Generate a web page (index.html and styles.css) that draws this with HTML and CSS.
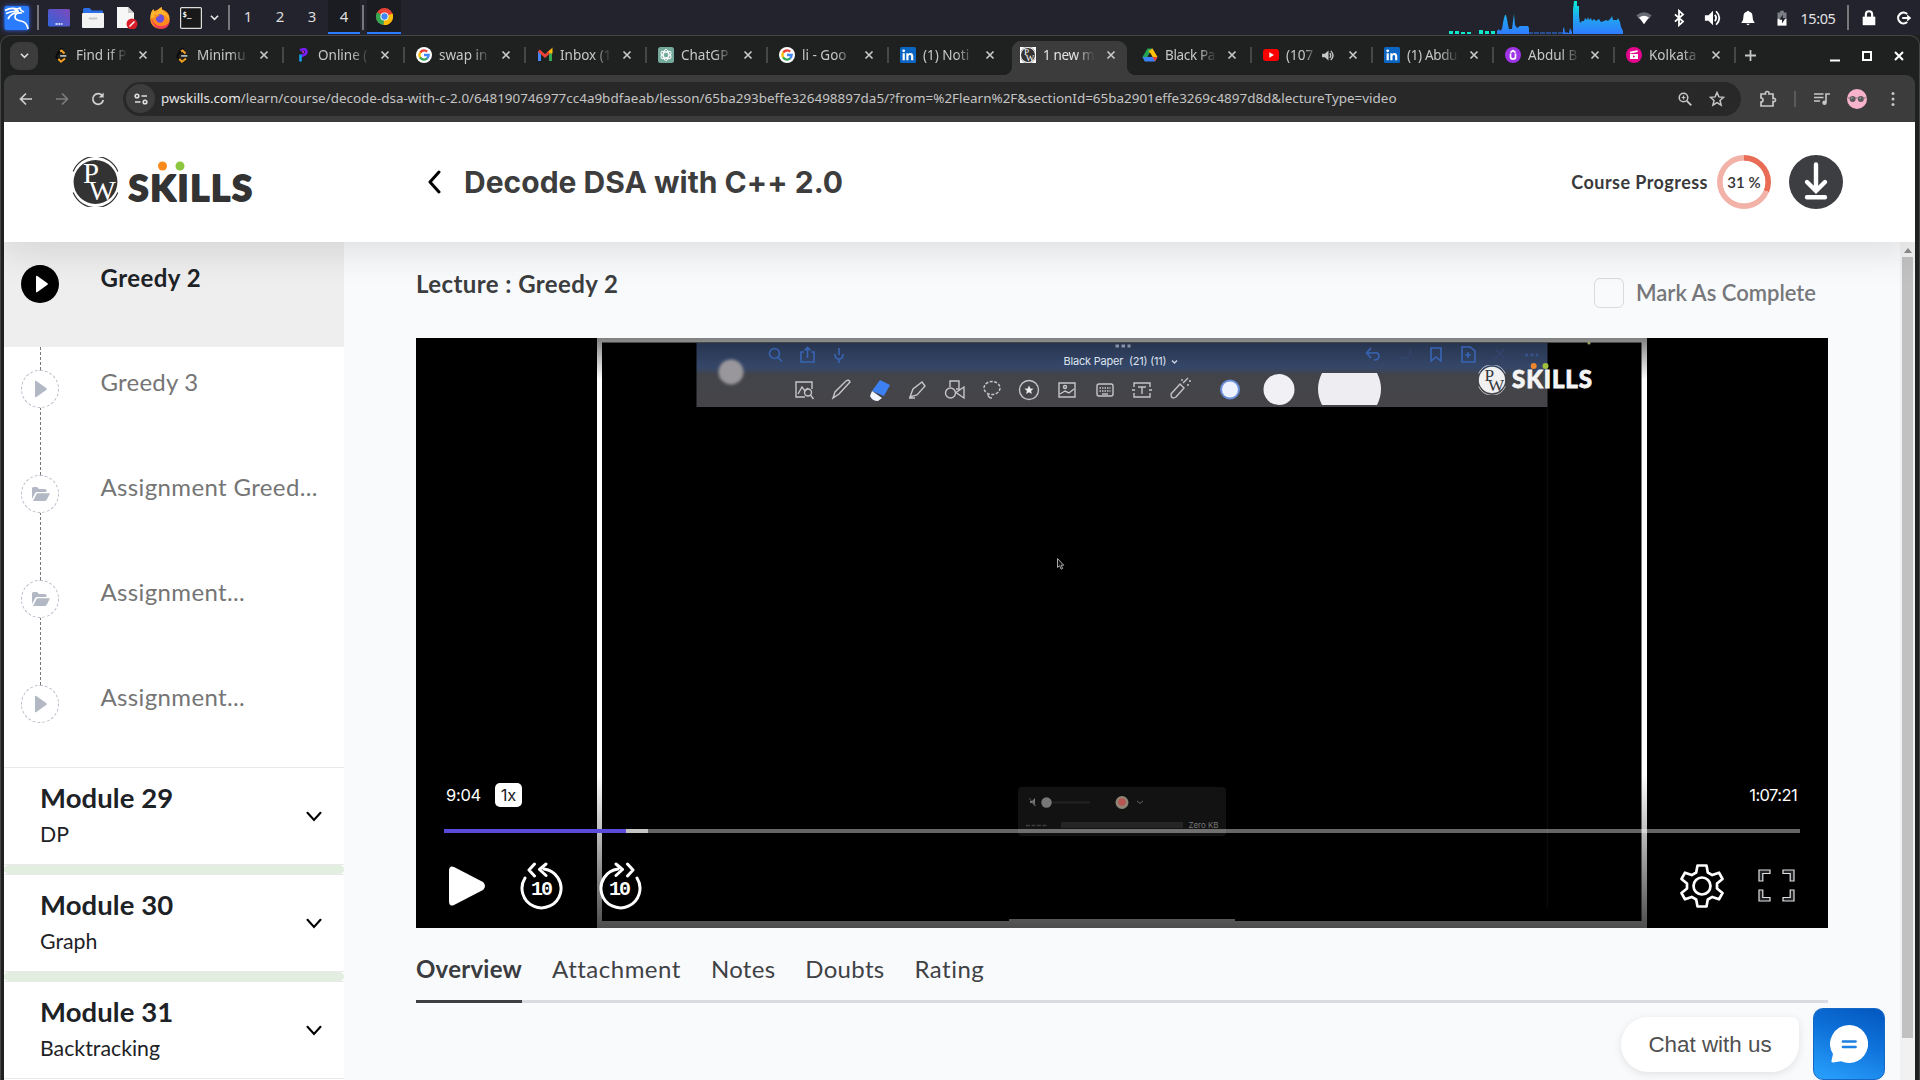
FILE: index.html
```html
<!DOCTYPE html>
<html lang="en">
<head>
<meta charset="utf-8">
<title>Decode DSA with C++ 2.0</title>
<link rel="stylesheet" href="styles.css">
</head>
<body>
<svg class="defs" aria-hidden="true">
  <symbol id="i-x" viewBox="0 0 10 10"><path d="M1.5 1.5l7 7M8.5 1.5l-7 7" fill="none" stroke="currentColor" stroke-width="1.7"/></symbol>
  <symbol id="i-leet" viewBox="0 0 16 18"><path d="M9.500 1L4.500 6.500" fill="none" stroke="#0b0b0b" stroke-width="2.200"/><path d="M6.500 5.500L3.200 9q-1.200 1.500 0 3l1.300 1.500" fill="none" stroke="#0b0b0b" stroke-width="2.200"/><path d="M7 5L8.500 4l3.500 3.300M5 13.500l3 3 4.500-3.500" fill="none" stroke="#f6a11f" stroke-width="2.200"/><path d="M7 10h7" stroke="#b5b5b5" stroke-width="2"/></symbol>
  <symbol id="i-google" viewBox="0 0 16 16"><circle cx="8" cy="8" r="8" fill="#fff"/><g fill="none" stroke-width="2.3"><path d="M4.2 5.6A4.6 4.6 0 0 1 11.2 4.7" stroke="#ea4335"/><path d="M4.2 5.5a4.8 4.8 0 0 0 0 5" stroke="#fbbc05"/><path d="M4.1 10.4a4.6 4.6 0 0 0 7 1" stroke="#34a853"/><path d="M8 8h4.7a4.8 4.8 0 0 1-1.7 3.5" stroke="#4285f4"/></g></symbol>
  <symbol id="i-in" viewBox="0 0 16 16"><rect width="16" height="16" rx="1.5" fill="#0a66c2"/><path d="M2.6 6.2h2.2v7H2.6zM6.3 6.2h2v1c1-1.700 5-1.700 5 2v4h-2.200V9.500c0-2-2.600-2-2.600 0v3.700H6.300z" fill="#fff"/><circle cx="3.7" cy="3.8" r="1.4" fill="#fff"/></symbol>
  <symbol id="i-pw" viewBox="0 0 48 52">
    <circle cx="24" cy="26" r="22.8" fill="currentColor"/>
    <path d="M.8 15A25 25 0 0 1 47.200 15M.8 37A25 25 0 0 0 47.200 37" fill="none" stroke="currentColor" stroke-width="1.200"/>
    <text class="pw-letter" x="11" y="27.500" font-size="30">P</text>
    <text class="pw-letter" x="17" y="45" font-size="28" textLength="28" lengthAdjust="spacingAndGlyphs">W</text>
  </symbol>
  <symbol id="i-play" viewBox="0 0 12 18"><path d="M1 .8L11.500 8.200q.6.800 0 1.600L1 17.200q-1 .3-1-.8V1.600q0-1.100 1-.8z" fill="currentColor"/></symbol>
  <symbol id="i-folder" viewBox="0 0 18 14"><path d="M0 12V1.500Q0 0 1.500 0h3.500l2 2h6q1.500 0 1.500 1.500V5H5Q3.800 5 3.300 6z" fill="currentColor"/><path d="M1 14l3-6q.6-1.700 2-1.700h12l-3 6Q14.500 14 13 14z" fill="currentColor"/></symbol>
  <symbol id="i-down" viewBox="0 0 16 11"><path d="M1.500 1.800L8 9l6.500-7.200" fill="none" stroke="#000" stroke-width="2.100" stroke-linecap="round"/></symbol>
</svg>

<div class="taskbar">
  <svg class="kali" viewBox="0 0 32 34"><rect x="4.500" y="5" width="24.500" height="24" rx="2" fill="#2b7bff"/><path d="M5 9.500Q11 6 17 8l3-1 1 2.500 3 1.500M6 12.500q7-3 13-2M8 18q4-8 14-6-7-1-7 4 0 3 6 4 6 1 7 8M14 8l4 2" fill="none" stroke="#fff" stroke-width="1.700"/></svg>
  <i class="vbar"></i>
  <svg class="app first" viewBox="0 0 22 18"><defs><linearGradient id="dg" x1="0" y1="1" x2="1" y2="0"><stop stop-color="#3264dd"/><stop offset="1" stop-color="#7d49b8"/></linearGradient></defs><rect width="22" height="17.500" rx="1.500" fill="url(#dg)"/><path d="M7.500 15h7" stroke="#fff" stroke-width="1.500" stroke-dasharray="2 .8"/></svg>
  <svg class="app" viewBox="0 0 22 20"><path d="M1 1.500Q1 0 2.500 0h5L10 2.500h10q1 0 1 1V8H1z" fill="#2d6fe8"/><rect y="5" width="22" height="15" rx="1" fill="#f3f3f3"/><rect x="6.500" y="9.500" width="9" height="2" rx="1" fill="#c9c9c9"/></svg>
  <svg class="app doc" viewBox="0 0 22 22"><path d="M1 0h11l6 6v15H1z" fill="#f7f7f7"/><path d="M12 0l6 6h-6z" fill="#ccc"/><circle cx="16" cy="17" r="5.500" fill="#d91e2a"/><path d="M13.500 19.500l5-5" stroke="#fff" stroke-width="1.400"/></svg>
  <svg class="app fox" viewBox="0 0 22 22"><circle cx="11" cy="12" r="9.800" fill="#ff8a1e"/><path d="M1.500 12Q1 5 4.500 2q.5 3 3 3.500Q9 1 13 0q-.5 3 2 4.500 6 3.500 5 10Q18 6 10 8z" fill="#ffb52e"/><path d="M2 10q2 12 10 12 8 0 9-9-2 6-9 6T2 10z" fill="#f03e55"/><circle cx="11" cy="11.500" r="4.200" fill="#6a50dd"/><path d="M5 8q4-1 6 1-4 0-4 3z" fill="#ff8a1e"/></svg>
  <svg class="app" viewBox="0 0 22 22"><rect x=".6" y=".6" width="20.800" height="20.800" rx="1" fill="#191919" stroke="#ddd" stroke-width="1.200"/><text x="2.500" y="9.500" font-size="7.500" font-family="DejaVu Sans Mono, monospace" font-weight="700" fill="#fff">$_</text></svg>
  <svg class="caret" viewBox="0 0 10 8"><path d="M1 1.500l4 4 4-4" fill="none" stroke="#e6e6e6" stroke-width="1.800"/></svg>
  <i class="vbar"></i>
  <div class="spaces"><span>1</span><span>2</span><span>3</span><span class="on">4</span></div>
  <i class="vbar"></i>
  <div class="task"><svg viewBox="0 0 20 20" width="17" height="17"><circle cx="10" cy="10" r="10" fill="#ea4335"/><path d="M10 10L1.300 5A10 10 0 0 0 9 20z" fill="#34a853"/><path d="M10 10l9.500-3.500A10 10 0 0 1 9 20z" fill="#fbbc05"/><circle cx="10" cy="10" r="4.800" fill="#fff"/><circle cx="10" cy="10" r="3.700" fill="#4285f4"/></svg></div>
  <svg class="meter" viewBox="1449 0 177 34" width="177" height="34"><defs><linearGradient id="mg" x1="0" y1="0" x2="0" y2="34" gradientUnits="userSpaceOnUse"><stop stop-color="#08f5d4"/><stop offset=".5" stop-color="#20a8f0"/><stop offset="1" stop-color="#2f7bff"/></linearGradient></defs><path d="M1449 31h4v3h-4zM1455 31h4v3h-4zM1461 32h4v2h-4zM1467 32h4v2h-4zM1479 30h4v4h-4zM1485 31h4v3h-4zM1491 31h4v3h-4z" fill="#0fe6cc"/><path d="M1497 34v-3l2-2 1 2 2-2 1-6 1-5 1-3h1l1 4 1 6 1 4h3l1-8 1-7 1 11 2 3 3-2h8l1 2v6zM1563 34v-5l1-2 1 6h4l1-5 2 4v2z" fill="url(#mg)"/><path d="M1573 34V10l1-9h3v5h2v10l1 7 2-2h2l1-3 2 2 1-3 1 3 2-2 1 3 2-2 2 2 3-2 2 3 3-1 2-1 2 1 3-3 1-2 1 4h4l1-2 2 4 1 5 2 4v3l2 1v2z" fill="url(#mg)"/><path d="M1528 33h40" stroke="#2f7bff" stroke-dasharray="5 1"/></svg>
  <div class="tray">
    <svg viewBox="0 0 20 20"><path d="M1.500 7Q10 0 18.500 7l-3 4h-11z" fill="#666a73"/><path d="M4.500 9.500q5.500-4 11 0L10 17z" fill="#fff"/></svg>
    <svg viewBox="0 0 20 20"><path d="M5.500 6l9 8-4.500 4V2l4.500 4-9 8" fill="none" stroke="#fff" stroke-width="2"/></svg>
    <svg viewBox="0 0 20 20"><path d="M1 7h4l5-5v16l-5-5H1z" fill="#fff"/><path d="M12 6.500q3 3.500 0 7M13.500 2.500q7 7.500 0 15" fill="none" stroke="#fff" stroke-width="2"/></svg>
    <svg viewBox="0 0 20 20"><path d="M2.500 15.500Q5 13 5 8q0-4 3.500-5 1.500-2 3 0Q15 4 15 8q0 5 2.500 7.500zM8 16.500h4q-2 3-4 0z" fill="#fff"/></svg>
    <svg class="bat" viewBox="0 0 20 20"><path d="M5 4h3V2h4v2h3v7H5z" fill="#7d7f86"/><path d="M5 11h10v7.500H5z" fill="#fff"/><path d="M11 6l-4 6h3v4l4-6h-3z" fill="#23232b"/></svg>
    <span class="clock">15:05</span>
    <i class="vbar"></i>
    <svg viewBox="0 0 20 20"><path d="M3 8.500h14V18H3z" fill="#fff"/><path d="M6.500 9V6q0-3.500 3.500-3.500T13.500 6v3" fill="none" stroke="#fff" stroke-width="2.400"/></svg>
    <svg viewBox="0 0 20 20"><path d="M13.500 5.500a6 6 0 1 0 0 9" fill="none" stroke="#fff" stroke-width="2.400"/><path d="M8 10h7" stroke="#fff" stroke-width="2.200"/><path d="M13.500 6l4.500 4-4.500 4z" fill="#fff"/></svg>
  </div>
</div>

<div class="window">
  <div class="tabstrip">
    <div class="tabmenu"><svg viewBox="0 0 10 8" width="9" height="8"><path d="M1 1.500l4 4 4-4" fill="none" stroke="#ddd" stroke-width="1.800"/></svg></div>
    <div class="tab"><svg class="fav"><use href="#i-leet"/></svg><span class="lbl">Find if P</span><svg class="x"><use href="#i-x"/></svg></div>
    <div class="tab"><svg class="fav"><use href="#i-leet"/></svg><span class="lbl">Minimu</span><svg class="x"><use href="#i-x"/></svg></div>
    <div class="tab"><svg class="fav" viewBox="0 0 16 16"><path d="M5 3.200q6-2.500 6.500 1.300 0 3-5 4.500" fill="none" stroke="#7a1cff" stroke-width="2.600"/><path d="M5.500 7.500v7" stroke="#12a4f5" stroke-width="2.500"/><path d="M7.500 6q1.500-1 0-2" fill="none" stroke="#e42be0" stroke-width="1.500"/></svg><span class="lbl">Online (</span><svg class="x"><use href="#i-x"/></svg></div>
    <div class="tab"><svg class="fav"><use href="#i-google"/></svg><span class="lbl">swap in</span><svg class="x"><use href="#i-x"/></svg></div>
    <div class="tab"><svg class="fav" viewBox="0 0 16 16"><path d="M2.500 14V4" stroke="#4285f4" stroke-width="3"/><path d="M13.500 14V4" stroke="#34a853" stroke-width="3"/><path d="M1.800 3.500L8 9l6.200-5.500" fill="none" stroke="#ea4335" stroke-width="3"/><path d="M12 5.500L14.500 3v3.500" stroke="#fbbc05" fill="none" stroke-width="2"/></svg><span class="lbl">Inbox (1</span><svg class="x"><use href="#i-x"/></svg></div>
    <div class="tab"><svg class="fav" viewBox="0 0 16 16"><rect width="16" height="16" rx="2.500" fill="#74aa9c"/><g fill="none" stroke="#fff"><ellipse cx="8" cy="8" rx="2.700" ry="5.500"/><ellipse cx="8" cy="8" rx="2.700" ry="5.500" transform="rotate(60 8 8)"/><ellipse cx="8" cy="8" rx="2.700" ry="5.500" transform="rotate(120 8 8)"/></g></svg><span class="lbl">ChatGP</span><svg class="x"><use href="#i-x"/></svg></div>
    <div class="tab"><svg class="fav"><use href="#i-google"/></svg><span class="lbl">li - Goo</span><svg class="x"><use href="#i-x"/></svg></div>
    <div class="tab last"><svg class="fav"><use href="#i-in"/></svg><span class="lbl">(1) Noti</span><svg class="x"><use href="#i-x"/></svg></div>
    <div class="tab active"><svg class="fav favpw"><use href="#i-pw"/></svg><span class="lbl tight">1 new m</span><svg class="x"><use href="#i-x"/></svg></div>
    <div class="tab"><svg class="fav" viewBox="0 0 16 16"><path d="M5.500 1.500h5L5.500 10 3 14.500.500 10z" fill="#23a455"/><path d="M10.500 1.500l5 8.500h-5L6.500 4z" fill="#ffc107"/><path d="M.500 10h15L13 14.500H3z" fill="#3b82f6"/><path d="M15.500 10L13 14.500 10.500 10z" fill="#ea4335"/><path d="M8 5.500l2.500 4.500h-5z" fill="#1f2120"/></svg><span class="lbl tight">Black Pa</span><svg class="x"><use href="#i-x"/></svg></div>
    <div class="tab"><svg class="fav" viewBox="0 0 16 16"><rect y="2" width="16" height="12" rx="3" fill="#f00"/><path d="M6.300 5.300v5.400L11 8z" fill="#fff"/></svg><span class="lbl short">(107</span><svg class="snd" viewBox="0 0 14 12"><path d="M0 4h3l4-3.500v11L3 8H0z" fill="#c7c7c7"/><path d="M8.500 3.500q2 2.500 0 5M9.500 1q5 5 0 10" fill="none" stroke="#c7c7c7" stroke-width="1.400"/></svg><svg class="x"><use href="#i-x"/></svg></div>
    <div class="tab"><svg class="fav"><use href="#i-in"/></svg><span class="lbl tight">(1) Abdu</span><svg class="x"><use href="#i-x"/></svg></div>
    <div class="tab"><svg class="fav" viewBox="0 0 16 16"><circle cx="8" cy="8" r="8" fill="#a032e8"/><path d="M5.500 6.500v3.500q0 2 2.500 2t2.500-2V6.500M5.500 5.500L8 3.500l2.500 2" fill="none" stroke="#fff" stroke-width="1.700"/></svg><span class="lbl">Abdul B</span><svg class="x"><use href="#i-x"/></svg></div>
    <div class="tab"><svg class="fav" viewBox="0 0 16 16"><circle cx="8" cy="8" r="8" fill="#e6068d"/><path d="M4 7h8v5H4zM3.800 4.800l7.600-1.500.4 1.600-7.600 1.500z" fill="#fff"/><path d="M7 8.200v2.600L9.300 9.500z" fill="#e6068d"/></svg><span class="lbl">Kolkata</span><svg class="x"><use href="#i-x"/></svg></div>
    <svg class="plus" viewBox="0 0 10 10"><path d="M5 0v10M0 5h10" stroke="#c7c7c7" stroke-width="1.600"/></svg>
    <div class="winctl">
      <svg viewBox="0 0 10 12"><path d="M0 10.500h10" stroke="#fff" stroke-width="2"/></svg>
      <svg viewBox="0 0 10 12"><rect x="1" y="2" width="8" height="8" fill="none" stroke="#fff" stroke-width="2"/></svg>
      <svg viewBox="0 0 10 12"><path d="M1 2l8 8M9 2l-8 8" stroke="#fff" stroke-width="2"/></svg>
    </div>
  </div>

  <div class="toolbar">
    <svg class="nav" viewBox="0 0 14 14"><path d="M13 7H2M7 1.500L1.500 7 7 12.500" fill="none" stroke="#d0d0d0" stroke-width="1.700"/></svg>
    <svg class="nav" viewBox="0 0 14 14"><path d="M1 7h11M7 1.500L12.500 7 7 12.500" fill="none" stroke="#7c7c7c" stroke-width="1.700"/></svg>
    <svg class="nav" viewBox="0 0 14 14"><path d="M11.500 4A5.300 5.300 0 1 0 12.300 8" fill="none" stroke="#d0d0d0" stroke-width="1.700"/><path d="M12.700.500v5h-5z" fill="#d0d0d0"/></svg>
    <div class="omni">
      <div class="site"><svg viewBox="0 0 14 12" width="14" height="12"><g fill="none" stroke="#e0e0e0" stroke-width="1.600"><circle cx="3" cy="3" r="1.800"/><path d="M7.500 3H13M1 9h5.500"/><circle cx="11" cy="9" r="1.800"/></g></svg></div>
      <span class="url"><b>pwskills.com</b>/learn/course/decode-dsa-with-c-2.0/648190746977cc4a9bdfaeab/lesson/65ba293beffe326498897da5/?from=%2Flearn%2F&amp;sectionId=65ba2901effe3269c4897d8d&amp;lectureType=video</span>
      <svg class="zoomi" viewBox="0 0 14 14"><circle cx="5.500" cy="5.500" r="4.300" fill="none" stroke="#c7c7c7" stroke-width="1.500"/><path d="M8.800 8.800l4.500 4.500" stroke="#c7c7c7" stroke-width="1.900"/><path d="M5.500 3.600v3.800M3.600 5.500h3.800" stroke="#c7c7c7" stroke-width="1.200"/></svg>
      <svg class="star" viewBox="0 0 16 16"><path d="M8 1.500l1.900 4.400 4.700.400-3.600 3.100 1.100 4.700L8 11.600l-4.100 2.500L5 9.400 1.400 6.300l4.700-.400z" fill="none" stroke="#c7c7c7" stroke-width="1.500"/></svg>
    </div>
    <svg class="ext" viewBox="0 0 18 18"><path d="M2 4h4.500q-.500-2.500 1.700-2.500T10 4h4v4.500q2.500-.500 2.500 1.500T14 11.500V16H2v-4q2 0 2-2T2 8z" fill="none" stroke="#c7c7c7" stroke-width="1.700"/></svg>
    <i class="tsep"></i>
    <svg class="media" viewBox="0 0 16 14"><path d="M0 2h9.500M0 5.500h9.500M0 9h6M12 10.500V2h4" fill="none" stroke="#c7c7c7" stroke-width="1.600"/><circle cx="10.500" cy="10.700" r="2.200" fill="#c7c7c7"/></svg>
    <svg class="ava" viewBox="0 0 20 20"><circle cx="10" cy="10" r="10" fill="#f7b3cc"/><circle cx="5.600" cy="10" r="3" fill="#5a5a5a"/><circle cx="13.800" cy="10" r="3" fill="#5a5a5a"/><path d="M4 9.500l1.500-1M12.500 9.500l1.500-1" stroke="#fff"/><path d="M1 9h18" stroke="#666" stroke-width=".8"/></svg>
    <svg class="dots" viewBox="0 0 4 16"><circle cx="2" cy="2.500" r="1.500" fill="#c7c7c7"/><circle cx="2" cy="8" r="1.500" fill="#c7c7c7"/><circle cx="2" cy="13.500" r="1.500" fill="#c7c7c7"/></svg>
  </div>

  <div class="page">
    <header class="head">
      <svg class="logo" viewBox="0 0 184 54" width="184" height="54">
        <use href="#i-pw" x="0" y="1" width="47" height="50"/>
        <text class="brand" x="56.500" y="44.500" font-size="36.500" textLength="123.500">SKILLS</text>
        <circle cx="90.500" cy="10" r="4.500" fill="#f98a1b"/><circle cx="108" cy="10" r="4.500" fill="#8cc63f"/>
      </svg>
      <svg class="back" viewBox="0 0 14 24" width="14" height="24"><path d="M12 2L3 12l9 10" fill="none" stroke="#000" stroke-width="3" stroke-linecap="round" stroke-linejoin="round"/></svg>
      <h1 class="title">Decode DSA with C++ 2.0</h1>
      <span class="cp">Course Progress</span>
      <div class="ring"><span>31 %</span></div>
      <svg class="dl" viewBox="0 0 54 54" width="54" height="54"><circle cx="27" cy="27" r="27" fill="#3d3e42"/><path d="M27 9.500V32M18 27l9 9 9-9M18 42.300h18" fill="none" stroke="#fff" stroke-width="4.400" stroke-linecap="round"/></svg>
    </header>

    <div class="main">
      <aside class="side">
        <div class="lesson cur"><div class="rail"><div class="dot"><svg width="12" height="18"><use href="#i-play"/></svg></div></div><span>Greedy 2</span></div>
        <div class="lesson"><div class="rail"><div class="dot"><svg width="12" height="18"><use href="#i-play"/></svg></div></div><span>Greedy 3</span></div>
        <div class="lesson wide"><div class="rail"><div class="dot"><svg width="18" height="14"><use href="#i-folder"/></svg></div></div><span>Assignment Greed...</span></div>
        <div class="lesson wide"><div class="rail"><div class="dot"><svg width="18" height="14"><use href="#i-folder"/></svg></div></div><span>Assignment...</span></div>
        <div class="lesson wide end"><div class="rail"><div class="dot"><svg width="12" height="18"><use href="#i-play"/></svg></div></div><span>Assignment...</span></div>
        <div class="module"><div><h2>Module 29</h2><p>DP</p></div><svg width="16" height="11"><use href="#i-down"/></svg></div>
        <div class="strip"></div>
        <div class="module"><div><h2>Module 30</h2><p>Graph</p></div><svg width="16" height="11"><use href="#i-down"/></svg></div>
        <div class="strip"></div>
        <div class="module"><div><h2>Module 31</h2><p>Backtracking</p></div><svg width="16" height="11"><use href="#i-down"/></svg></div>
      </aside>

      <section class="content">
        <div class="lechead">
          <h2>Lecture : Greedy 2</h2>
          <label class="mark"><i></i><span>Mark As Complete</span></label>
        </div>
        <div class="video">
          <svg class="frame" viewBox="416 338 1412 590" width="1412" height="590">
            <defs>
              <linearGradient id="tb" x1="0" y1="0" x2="0" y2="1"><stop stop-color="#27354f"/><stop offset=".38" stop-color="#354769"/><stop offset=".5" stop-color="#434449"/><stop offset="1" stop-color="#454549"/></linearGradient>
              <linearGradient id="sh" x1="0" y1="0" x2="0" y2="1"><stop stop-opacity=".5"/><stop offset=".07" stop-opacity="0"/><stop offset=".74" stop-opacity="0"/><stop offset="1" stop-opacity=".7"/></linearGradient>
              <filter id="soft"><feGaussianBlur stdDeviation="1.500"/></filter>
              <filter id="slight"><feGaussianBlur stdDeviation=".5"/></filter>
            </defs>
            <path d="M597 338h1050v590H597z" fill="#fff"/>
            <path d="M602 342.500h1039.500V921H602z" fill="#000"/>
            <path d="M1009 919h226v3h-226z" fill="#fff"/>
            <path d="M597 338h1050v590H597z" fill="url(#sh)"/>
            <path d="M1547.500 407v500" stroke="#0b0b0d" stroke-width="1.500"/>
            <path d="M696.500 343h851v64h-851z" fill="url(#tb)"/>
            <circle cx="731" cy="372" r="12.500" fill="#99979b" filter="url(#soft)"/>
            <g fill="none" stroke="#3764b4" stroke-width="1.600" filter="url(#slight)">
              <circle cx="774.500" cy="353.500" r="5"/><path d="M778 357.500l4 4M804 352h-3v10h13v-10h-3M807.500 358v-10M804.500 350.500l3-3 3 3M839 348v7M835 354q0 5 4 5t4-5M839 359v4"/>
              <path d="M1374 360q5 0 5-4t-5-3h-6M1371 348l-4.500 5 4.500 5M1431 348h10v13l-5-4-5 4zM1462 347h8l5 4v11h-13zM1468 352v6M1465 355h6"/>
              <path d="M1410 350q2 5-3 8h-8M1496 350l9 9M1504 349l-10 11" stroke="#33436d"/>
              <path d="M1525 355h13" stroke-dasharray="3 2.500" stroke-width="2.500" stroke="#36538c"/>
            </g>
            <path d="M1115.500 346h15" stroke="#8791a5" stroke-width="3" stroke-dasharray="3.500 2.500"/>
            <text x="1063.500" y="365" font-size="11" textLength="103" xml:space="preserve" fill="#dde3ef" font-family="Inter, sans-serif">Black Paper  (21) (11)</text>
            <path d="M1172 360.500l2.500 2.500 2.500-2.500" fill="none" stroke="#cdd5e4" stroke-width="1.400"/>
            <g fill="none" stroke="#c5c4c7" stroke-width="1.400">
              <path d="M812 389v-7h-16v15h9M798 394l4-7 3 4 3-3"/><circle cx="808" cy="392.500" r="3.500"/><path d="M810.500 395l3 4"/>
              <path d="M833 398l2-6 11-11q3-2 4 1l-11 12zM910 397l3-8 9-7 3 4-8 9zM909 398h6"/>
              <circle cx="950.500" cy="393" r="5"/><path d="M950 387v-6h9v8h-3M964 387v11l-8-5.500z"/>
              <ellipse cx="992" cy="388" rx="8" ry="6.500" stroke-dasharray="3 1.500"/><path d="M988 394q0 4 4 4"/>
              <circle cx="1029" cy="390" r="9.500"/><path d="M1059 383h16v14h-16zM1060 394l5-3 4 2 5-4"/><circle cx="1065" cy="387" r="1.500"/>
              <rect x="1097" y="384" width="16" height="12" rx="2"/><path d="M1099.500 388h11M1099.500 391h11" stroke-dasharray="1.500 1"/><path d="M1102 394h6"/>
              <path d="M1134 387v-4h16v4M1134 393v4h16v-4M1132 390h3M1149 390h3M1138 387h8M1142 387v7"/>
              <path d="M1171 394l9-10 4 4-8 9q-5 3-5-3zM1183 383l5-5M1182 379v2M1187 385h2M1189 381h2"/>
            </g>
            <path d="M1029 385.500l1.300 2.900 3.200.300-2.400 2.100.700 3.100-2.800-1.700-2.800 1.700.7-3.100-2.400-2.100 3.200-.3z" fill="#eee"/>
            <path d="M872 391l8-11 10 5-6 11z" fill="#3d80f2"/><path d="M872 391l10 7-4 3q-6 0-8-5z" fill="#f3f6ff"/>
            <circle cx="1230" cy="389.500" r="10" fill="#6a8ed8"/><circle cx="1230" cy="389.500" r="8" fill="#eef2ff"/>
            <circle cx="1279" cy="389.500" r="15.500" fill="#f1f0f5"/>
            <path d="M1322 373h55q8 16 0 32h-55q-8-16 0-32z" fill="#eeeef2"/>
            <circle cx="1589" cy="343" r="1.600" fill="#98a068"/>
            <g class="wm"><use href="#i-pw" x="1478" y="365" width="28" height="30"/><text x="1512" y="388" font-size="24" textLength="80" class="wm-text">SKILLS</text><circle cx="1533.700" cy="366" r="3" fill="#f0862e"/><circle cx="1545.500" cy="366" r="3" fill="#a2bf3c"/></g>
            <path d="M1057.500 558.500v9l2-1.800 1.700 3.500 1.500-.8-1.600-3.200h2.600z" fill="#111" stroke="#bbb" stroke-width=".9"/>
            <rect x="1018" y="787" width="208" height="49" rx="4" fill="#121212"/>
            <path d="M1030 801h2l3-3v8l-3-3h-2z" fill="#777"/><path d="M1029 798l7 8" stroke="#555"/><path d="M1051 802.500h39" stroke="#222" stroke-width="2"/><circle cx="1046.500" cy="802.500" r="5.200" fill="#777"/>
            <circle cx="1122" cy="802.500" r="6.500" fill="#8e8577"/><circle cx="1122" cy="802" r="3.800" fill="#b95550"/><path d="M1137 801l3 2.500 3-2.500" fill="none" stroke="#666"/>
            <path d="M1026 825.500h22" stroke="#3e3e3e" stroke-width="1.500" stroke-dasharray="4 1.500"/><path d="M1061 825h122" stroke="#252525" stroke-width="6"/>
            <text x="1188.500" y="828" font-size="8" textLength="30" fill="#777" font-family="Inter, sans-serif">Zero KB</text>
          </svg>
          <div class="controls">
            <div class="times"><span>9:04</span><b>1x</b><span class="total">1:07:21</span></div>
            <div class="track"><i class="played"></i><i class="buffered"></i></div>
            <div class="buttons">
              <svg viewBox="0 0 38 42" width="38" height="42"><path d="M1 6Q1 0 6 2L35 17q4 4 0 8L6 40Q1 42 1 36z" fill="#fff"/></svg>
              <svg class="b10" viewBox="0 0 44 48" width="44" height="48"><path d="M5 16A19.500 19.500 0 1 0 24 7" fill="none" stroke="#fff" stroke-width="3" stroke-linecap="round"/><path d="M14.500 2L9 8l5.500 6M26 2l-6.500 5.500L26 13.500" fill="none" stroke="#fff" stroke-width="3" stroke-linecap="round" stroke-linejoin="round"/><text x="21" y="33" class="ten">10</text></svg>
              <svg class="f10" viewBox="0 0 44 48" width="44" height="48"><path d="M39 16A19.500 19.500 0 1 1 20 7" fill="none" stroke="#fff" stroke-width="3" stroke-linecap="round"/><path d="M29.500 2L35 8l-5.500 6M18 2l6.500 5.500L18 13.500" fill="none" stroke="#fff" stroke-width="3" stroke-linecap="round" stroke-linejoin="round"/><text x="21" y="33" class="ten">10</text></svg>
              <svg class="gear" viewBox="-22 -22 44 44" width="44" height="44"><g fill="none" stroke="#fff" stroke-width="2.700" stroke-linejoin="round"><path d="M-4.500-20.500h9l1.300 7 4.500 2.600 6.700-2.400 3.500 6.300-5.500 4.500v5l5.500 4.500-3.500 6.300-6.700-2.400-4.500 2.600-1.300 7h-9l-1.300-7-4.500-2.600-6.700 2.400-3.500-6.300 5.500-4.500v-5l-5.500-4.500 3.500-6.300 6.700 2.400 4.500-2.600z"/><circle r="8.500"/></g></svg>
              <svg class="full" viewBox="0 0 37 33" width="37" height="33"><path d="M1 12V1h11v3.500H4.800V12zM25 1h11v11h-3.800V4.500H25zM1 21v11h11v-3.500H4.800V21zM36 21v11H25v-3.500h7.200V21z" fill="#222629" stroke="#e2e2e2" stroke-width="1.200"/></svg>
            </div>
          </div>
        </div>
        <nav class="tabs"><a class="on">Overview</a><a class="att">Attachment</a><a>Notes</a><a>Doubts</a><a class="att">Rating</a></nav>
      </section>
      <div class="scroll"><i class="up"></i><i class="thumb"></i></div>
    </div>
  </div>
</div>

<div class="chat">Chat with us</div>
<div class="chatbtn"><svg viewBox="0 0 38 38" width="38" height="38"><path d="M19 0a19 19 0 1 1-8 36.200Q6 37 3 37.500q-2 0-1.500-2L3 29A19 19 0 0 1 19 0z" fill="#fff"/><path d="M13 16.500h12.500M13 22h12.500" stroke="#1b80df" stroke-width="2.700" stroke-linecap="round"/></svg></div>
</body>
</html>
```
FILE: styles.css
```css
* { box-sizing: border-box; }
body { margin: 0; width: 1920px; height: 1080px; overflow: hidden; background: #1f2120; font-family: Lato, sans-serif; display: flex; flex-direction: column; }
h1, h2, p { margin: 0; }
svg { flex: none; display: block; }
.defs { display: none; }

/* desktop panel */
.taskbar { height: 35px; flex: none; background: #23232d; display: flex; align-items: center; color: #ddd; }
.kali { width: 32px; height: 34px; filter: drop-shadow(0 0 2px #2b6bff); margin-right: 5px; }
.vbar { width: 2px; height: 25px; background: #77777c; flex: none; }
.app { width: 22px; height: 22px; margin-right: 12px; }
.first { margin-left: 9px; }
.doc { margin-right: 11px; }
.fox { margin-right: 9px; }
.caret { width: 9px; height: 8px; margin: 0 9px 0 -4px; }
.spaces { display: flex; flex: none; height: 34px; margin-left: 2px; font: 15px/32px "Noto Sans", sans-serif; align-self: flex-start; }
.spaces span { width: 32px; text-align: center; }
.spaces .on, .task { background: #1b1b22; border-bottom: 2px solid #2a7bff; }
.spaces + .vbar { margin: 0 3px 0 2px; }
.task { width: 34px; height: 34px; flex: none; align-self: flex-start; display: flex; align-items: center; justify-content: center; }
.meter { margin-left: auto; align-self: flex-start; }
.tray { display: flex; align-items: center; flex: none; width: 294px; padding-left: 9px; }
.tray svg { width: 18px; height: 18px; margin-right: 16.600px; }
.tray .bat { margin-right: 9px; }
.clock { width: 36px; flex: none; margin-right: 11px; font: 14.500px/20px "Noto Sans", sans-serif; letter-spacing: -.4px; color: #e4e4e4; }
.tray .vbar { margin-right: 11px; }

/* browser window */
.window { flex: 1; min-height: 0; border: 1px solid #454545; border-bottom: 0; border-radius: 10px 10px 0 0; padding: 0 4px 0 3px; display: flex; flex-direction: column; }
.tabstrip { height: 39px; flex: none; display: flex; align-items: center; font: 13.500px/20px "Noto Sans", sans-serif; color: #c7c7c7; }
.tabmenu { width: 28px; height: 28px; margin-left: 6px; margin-right: 3px; border-radius: 9px; background: #3c3c3c; display: flex; align-items: center; justify-content: center; }
.tab { width: 121px; height: 34px; margin-top: 5px; padding: 0 15px 6px 12px; display: flex; align-items: center; position: relative; }
.tab::after { content: ""; position: absolute; right: -1px; top: 6px; width: 2px; height: 16px; background: #474747; }
.tab.last::after, .tab.active::after { display: none; }
.fav { width: 16px; height: 16px; margin-right: 7px; }
.favpw { background: #fff; color: #222; --pw: #fff; }
.lbl { width: 54px; white-space: nowrap; mask-image: linear-gradient(90deg, #000 62%, transparent 96%); }
.tight { letter-spacing: -.350px; }
.short { width: 31px; }
.snd { width: 13px; height: 11px; margin-left: 5px; margin-right: -12px; }
.x { width: 10px; height: 10px; margin-left: auto; margin-right: -1px; color: #c7c7c7; }
.active { background: #3c3c3c; border-radius: 9px 9px 0 0; width: 115px; margin-left: 3px; margin-right: 3px; padding: 0 12px 6px 8px; color: #e3e3e3; }
.active::before { content: ""; position: absolute; left: -9px; right: -9px; bottom: 0; height: 9px; background: radial-gradient(circle at 0 0, transparent 9px, #3c3c3c 9.500px) left / 9px 9px no-repeat, radial-gradient(circle at 100% 0, transparent 9px, #3c3c3c 9.500px) right / 9px 9px no-repeat; }
.plus { width: 11px; height: 11px; margin-left: 10px; }
.winctl { display: flex; gap: 22px; margin-left: auto; margin-right: 11px; }
.winctl svg { width: 10px; height: 12px; }

.toolbar { height: 47px; flex: none; background: #3c3c3c; border-radius: 9px 9px 0 0; display: flex; align-items: center; padding-left: 15px; }
.nav { width: 14px; height: 14px; margin-right: 22px; }
.nav:nth-child(3) { margin-right: 18px; }
.omni { width: 1618px; height: 34px; border-radius: 17px; background: #282828; display: flex; align-items: center; padding: 0 16px 0 3px; }
.site { width: 29px; height: 29px; margin-right: 6px; border-radius: 50%; background: #3d3d3d; display: flex; align-items: center; justify-content: center; }
.url { font: 13.450px/20px "Noto Sans", sans-serif; color: #c4c4c4; white-space: nowrap; padding-bottom: 2px; }
.url b { font-weight: 400; color: #e6e6e6; }
.zoomi { width: 14px; height: 14px; margin-left: auto; margin-right: 17px; }
.star { width: 16px; height: 16px; }
.ext { width: 18px; height: 18px; margin-left: 18px; margin-right: 17px; }
.tsep { width: 2px; height: 16px; background: #5a5a5a; }
.media { width: 16px; height: 14px; margin-left: 18px; }
.ava { width: 20px; height: 20px; margin-left: 17px; }
.dots { width: 4px; height: 16px; margin-left: 24px; }

/* page */
.page { flex: 1; min-height: 0; background: #f9fafc; display: flex; flex-direction: column; }
.head { height: 120px; flex: none; background: #fff; display: flex; align-items: center; padding: 0 72px 0 68px; box-shadow: 0 8px 38px rgba(0, 0, 0, .12); position: relative; z-index: 2; clip-path: inset(0 0 -70px 0); }
.logo, .favpw { color: #333; }
.pw-letter { font-family: "Liberation Serif", serif; fill: var(--pw, #fff); }
.brand { font-family: Lato, sans-serif; font-weight: 900; fill: #333; stroke: #333; stroke-width: 1.800px; stroke-linejoin: round; }
.logo { margin-top: 2px; }
.back { margin-left: 171px; }
.title { margin-left: 23px; font: 700 30px/36px Inter, sans-serif; color: #3d3d3d; letter-spacing: .020px; }
.cp { margin-left: auto; margin-right: 9px; font-size: 18px; font-weight: 700; letter-spacing: .45px; color: #3a3a3c; }
.ring { width: 54px; height: 54px; border-radius: 50%; margin-right: 18px; display: flex; align-items: center; justify-content: center; background: radial-gradient(circle, #fff 21px, transparent 21.700px), conic-gradient(#e86c56 31%, #f2b2a8 0); font-size: 15px; font-weight: 600; color: #333; }

.main { flex: 1; min-height: 0; display: flex; }
.side { width: 340px; flex: none; background: #fff; overflow: hidden; }
.lesson { height: 105px; display: flex; padding-left: 17px; font-size: 24px; letter-spacing: .220px; line-height: 30px; color: #757575; }
.lesson span { margin: 20px 0 0 41.500px; }
.wide { letter-spacing: .360px; }
.rail { width: 38px; padding-top: 23px; background: repeating-linear-gradient(180deg, #777 0 3px, transparent 3px 5px) 18.500px 0 / 1px 100% no-repeat; }
.dot { width: 38px; height: 38px; padding-left: 2px; border-radius: 50%; display: flex; align-items: center; justify-content: center; color: #b2b8c4; background: #fff; border: 1.500px dashed #b6bac8; }
.cur { background: #eee; color: #1d2226; font-weight: 700; letter-spacing: .450px; }
.cur span { margin-top: 21px; }
.cur .rail { background: none; }
.cur .dot { background: #000; border: 0; color: #fff; padding-left: 3px; }
.end .rail { background-size: 1px 25px; }
.module { height: 98px; border-top: 1px solid #e9e9e9; border-bottom: 1px solid #e9e9e9; display: flex; align-items: center; padding: 0 22px 0 36px; justify-content: space-between; color: #1d2226; }
.module h2 { font-size: 27.500px; line-height: 36px; margin: -1px 0 1px; font-weight: 700; letter-spacing: .080px; }
.module p { font-size: 21.300px; line-height: 34px; }
.strip { height: 9px; background: #e2eee0; border-radius: 5px; }

.content { flex: 1; padding: 0 72px; }
.lechead { height: 96px; display: flex; justify-content: space-between; padding: 26px 12px 0 0; color: #3b3d3f; }
.lechead h2 { font-size: 24px; line-height: 32px; margin-top: -.500px; font-weight: 700; letter-spacing: .420px; }
.mark { display: flex; align-items: center; height: 30px; margin-top: 10px; gap: 12px; font-size: 22px; font-weight: 600; color: #75777a; }
.mark i { width: 30px; height: 30px; border: 1px solid #d8dadd; border-radius: 6px; }
.mark span { padding-bottom: 2px; }
.video { height: 590px; width: 1412px; background: #000; position: relative; }
.wm { color: #f0f0f0; --pw: #34363c; }
.wm-text { font-family: Lato, sans-serif; font-weight: 900; fill: #f4f4f4; stroke: #f4f4f4; stroke-width: .800px; }
.controls { position: absolute; left: 28px; right: 28px; bottom: 18px; }
.times { display: flex; align-items: center; height: 24px; padding: 0 3px 0 2px; font: 16.500px/24px Inter, sans-serif; letter-spacing: -.300px; color: #fff; }
.times b { width: 27px; height: 24px; margin-left: 14px; border-radius: 5px; background: #fff; color: #222; font-weight: 400; text-align: center; }
.total { margin-left: auto; letter-spacing: -.600px; }
.track { height: 4px; margin: 22px 0 28px; background: rgba(255, 255, 255, .4); display: flex; }
.played { width: 182px; background: #5a4bda; }
.buffered { width: 22px; background: #c4c4c4; }
.buttons { display: flex; align-items: center; height: 49px; padding: 0 5px 0 4px; }
.b10 { margin-left: 34px; }
.f10 { margin-left: 34px; }
.gear { margin-left: auto; }
.full { margin-left: 34px; }
.ten { font: 700 20px "Liberation Mono", monospace; letter-spacing: -2px; fill: #fff; text-anchor: middle; }
.tabs { height: 75px; display: flex; gap: 30px; border-bottom: 3px solid #dadbe2; font-size: 24px; line-height: 30px; letter-spacing: .300px; color: #404245; padding-top: 26px; }
.tabs .on { height: 49px; font-weight: 700; letter-spacing: .250px; border-bottom: 3px solid #3f4043; color: #3a3c3f; }
.att { letter-spacing: .500px; }

.scroll { width: 15px; flex: none; background: #f1f1f1; display: flex; flex-direction: column; align-items: center; }
.up { margin: 6px 0 4px; border: 4px solid transparent; border-top: 0; border-bottom: 5px solid #8b8b8b; }
.thumb { width: 11px; height: 781px; background: #c1c1c1; }

/* chat launcher */
.chat { position: absolute; left: 1621px; top: 1017px; width: 178px; height: 55px; border-radius: 28px 8px 28px 28px; background: #fff; box-shadow: 0 2px 8px rgba(0, 0, 0, .1); font: 22.400px/55px "Liberation Sans", sans-serif; color: #505050; text-align: center; }
.chatbtn { position: absolute; left: 1813px; top: 1008px; width: 72px; height: 72px; border-radius: 10px; border: 1px solid #1568c8; background: linear-gradient(20deg, #2aa2ff, #0d6fd8 60%, #0257bd); display: flex; align-items: center; justify-content: center; }
```
